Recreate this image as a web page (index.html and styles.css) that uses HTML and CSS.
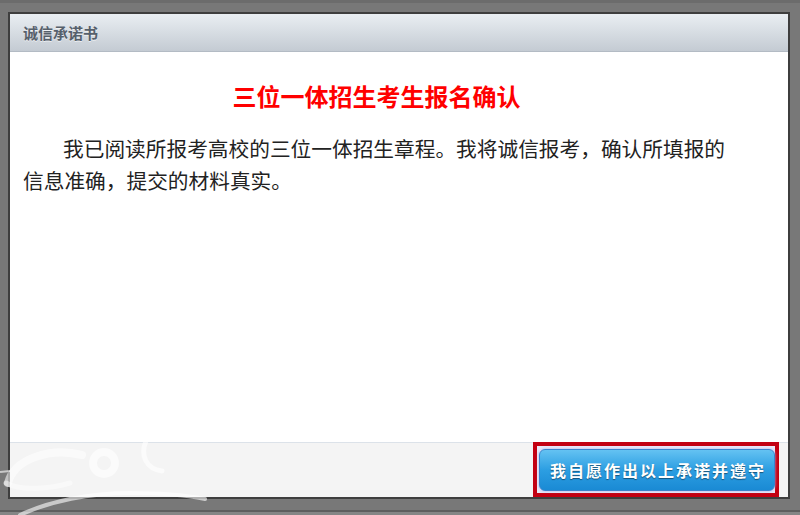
FILE: index.html
```html
<!DOCTYPE html>
<html lang="zh-CN">
<head>
<meta charset="utf-8">
<title>诚信承诺书</title>
<link rel="stylesheet" href="styles.css">
</head>
<body>
<div class="screen">
  <div class="dialog">
    <div class="dialog-header">诚信承诺书</div>
    <div class="dialog-body">
      <h1 class="headline">三位一体招生考生报名确认</h1>
      <p class="statement">我已阅读所报考高校的三位一体招生章程。我将诚信报考，确认所填报的信息准确，提交的材料真实。</p>
    </div>
    <div class="dialog-footer">
      <div class="highlight">
        <button class="confirm-btn" type="button">我自愿作出以上承诺并遵守</button>
      </div>
    </div>
  </div>
  <svg class="watermark" width="220" height="80" viewBox="0 0 220 80" aria-hidden="true">
    <path d="M8 48 C 14 24, 50 12, 82 20" fill="none" stroke="#fff" stroke-width="8" stroke-linecap="round" opacity="0.55"/>
    <path d="M6 48 C 20 56, 50 54, 70 48" fill="none" stroke="#fff" stroke-width="5" stroke-linecap="round" opacity="0.45"/>
    <circle cx="104" cy="28" r="11" fill="none" stroke="#fff" stroke-width="8" opacity="0.6"/>
    <path d="M146 6 C 140 20, 146 34, 162 36" fill="none" stroke="#fff" stroke-width="5" stroke-linecap="round" opacity="0.6"/>
    <path d="M20 80 C 50 66, 90 58, 130 58 C 160 58, 185 60, 205 64" fill="none" stroke="#fff" stroke-width="4" stroke-linecap="round" opacity="0.6"/>
    <path d="M0 37 L 10 36" fill="none" stroke="#fff" stroke-width="2" opacity="0.6"/>
  </svg>
</div>
</body>
</html>
```

FILE: styles.css
```css
html, body {
  margin: 0;
  padding: 0;
}

body {
  width: 800px;
  height: 515px;
  overflow: hidden;
  background: #777777;
  font-family: "Noto Sans CJK SC", "Noto Sans", sans-serif;
}

.screen {
  position: relative;
  width: 800px;
  height: 515px;
  box-sizing: border-box;
  padding: 12px 10px 16px 8px;
  background: linear-gradient(#6c6c6c 0, #6c6c6c 3px, #787878 3px, #787878 510px, #5e5e5e 510px, #5e5e5e 512px, #858585 512px);
}

.dialog {
  height: 100%;
  box-sizing: border-box;
  border: 2px solid #3e3e3e;
  display: flex;
  flex-direction: column;
  background: #ffffff;
}

.dialog-header {
  height: 38px;
  box-sizing: border-box;
  border-bottom: 1px solid #b3bbc4;
  background: linear-gradient(#e9eef2, #c4cbd3);
  padding-left: 13px;
  font-size: 15px;
  font-weight: bold;
  line-height: 37px;
  color: #56606b;
  text-shadow: 0 1px 0 rgba(255, 255, 255, 0.6);
}

.dialog-body {
  flex: 1;
  padding: 28px 58px 0 13px;
  color: #222222;
}

.headline {
  margin: 0;
  font-size: 24px;
  line-height: 32px;
  font-weight: bold;
  color: #ff0000;
  text-align: center;
}

.statement {
  margin: 20px 0 0;
  font-size: 20.7px;
  line-height: 32px;
  text-indent: 40px;
}

.dialog-footer {
  height: 55px;
  box-sizing: border-box;
  border-top: 1px solid #dce2e9;
  background: #f4f4f4;
  display: flex;
  justify-content: flex-end;
  align-items: stretch;
  padding-right: 9px;
}

.highlight {
  margin-top: -1px;
  box-sizing: border-box;
  border: 4px solid #c30012;
  padding: 3px 0 2px 2px;
  background: #e9e9f8;
  display: flex;
}

.confirm-btn {
  width: 236px;
  height: 42px;
  box-sizing: border-box;
  border: 1px solid #3b84cc;
  border-radius: 6px;
  background: linear-gradient(#64c2f2, #2c9ee2 50%, #1a8ad4);
  box-shadow: 0 0 3px #a9aeea;
  color: #ffffff;
  font-family: "Noto Sans CJK SC", "Noto Sans", sans-serif;
  font-size: 16px;
  font-weight: bold;
  letter-spacing: 2px;
  padding: 0 0 0 2px;
  text-shadow: 0 1px 1px rgba(0, 0, 0, 0.45);
  cursor: pointer;
}

.watermark {
  position: absolute;
  left: 0;
  bottom: 0;
  pointer-events: none;
}
```
